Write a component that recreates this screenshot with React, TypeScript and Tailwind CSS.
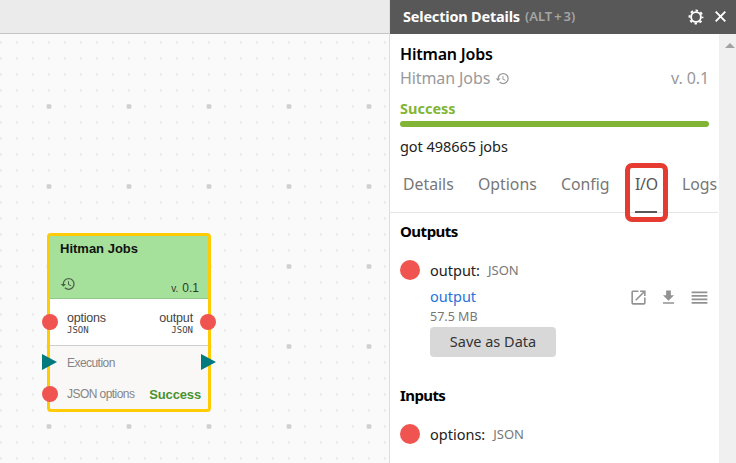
import type { ReactNode } from 'react';
import { MdHistory, MdOpenInNew, MdFileDownload, MdReorder } from 'react-icons/md';

function GridDots() {
  return (
    <svg className="absolute inset-0 h-full w-full" aria-hidden="true">
      <defs>
        <pattern id="minor" width="16" height="16" x="9" y="2" patternUnits="userSpaceOnUse">
          <rect x="7" y="7.5" width="2" height="2" fill="#e6e6e6" />
        </pattern>
        <pattern id="major" width="80" height="80" x="9" y="66" patternUnits="userSpaceOnUse">
          <rect x="37.7" y="38.2" width="4.6" height="4.6" rx="1" fill="#d0d0d0" />
        </pattern>
      </defs>
      <rect width="100%" height="100%" fill="url(#minor)" />
      <rect width="100%" height="100%" fill="url(#major)" />
    </svg>
  );
}

function Port({ className }: { className: string }) {
  return <span className={`absolute h-4 w-4 rounded-full bg-[#f05450] ${className}`} />;
}

function ExecPort({ className }: { className: string }) {
  return (
    <svg className={`absolute h-4 w-[15px] ${className}`} viewBox="0 0 15 16">
      <path d="M0 0L15 8L0 16Z" fill="#00797f" />
    </svg>
  );
}

function WorkflowNode() {
  return (
    <div className="absolute top-[233px] left-[47px] flex h-[179px] w-[164px] flex-col rounded-[4px] border-[3px] border-[#ffcb05] bg-[#faf8f6] font-['Liberation_Sans',sans-serif]">
      <div className="flex h-[63px] flex-col justify-between border-b border-[#92c98b] bg-[#a6e19c] pt-[4px] pr-[9px] pb-px pl-[10px]">
        <div className="text-[13px] leading-[17px] font-bold text-[#111]">Hitman Jobs</div>
        <div className="flex items-end justify-between">
          <MdHistory className="mb-[5px] h-[16px] w-[16px] text-[#4c5f49]" />
          <div className="text-[12px] leading-[17px] text-[#2c3b29]">
            <span className="mr-[4px] text-[10px]">v.</span>0.1
          </div>
        </div>
      </div>
      <div className="flex h-[47px] justify-between border-b border-[#cfcfcf] bg-white pr-[15px] pl-[17px] pt-[12px] text-[12.5px] leading-[15px] text-[#444]">
        <div>
          <div className="tracking-[-0.2px]">options</div>
          <div className="-mt-px font-['DejaVu_Sans_Mono',monospace] text-[9px] leading-[10px]">JSON</div>
        </div>
        <div className="text-right">
          <div className="tracking-[-0.15px]">output</div>
          <div className="-mt-px font-['DejaVu_Sans_Mono',monospace] text-[9px] leading-[10px]">JSON</div>
        </div>
      </div>
      <div className="flex flex-1 flex-col justify-between pt-[9px] pr-[7px] pb-[6px] pl-[17px] text-[12px] leading-[17px] text-[#858585]">
        <div className="tracking-[-0.55px]">Execution</div>
        <div className="flex justify-between">
          <span className="tracking-[-0.55px]">JSON options</span>
          <span className="text-[13px] font-bold tracking-[-0.15px] text-[#48922f]">Success</span>
        </div>
      </div>
      <Port className="top-[78px] left-[-8px]" />
      <Port className="top-[78px] right-[-8px]" />
      <ExecPort className="top-[118px] left-[-8px]" />
      <ExecPort className="top-[118px] right-[-8px]" />
      <Port className="top-[150px] left-[-8px]" />
    </div>
  );
}

function Gear() {
  return (
    <svg className="h-4 w-4" viewBox="0 0 16 16" fill="none" stroke="#fff">
      <circle cx="8" cy="8" r="4.9" strokeWidth="1.9" />
      <circle cx="8" cy="8" r="6.5" strokeWidth="1.9" strokeDasharray="2.5 2.605" strokeDashoffset="1.25" />
    </svg>
  );
}

function Tab({ children, active, className }: { children: ReactNode; active?: boolean; className: string }) {
  return (
    <div className={`relative h-[42px] shrink-0 whitespace-nowrap ${active ? 'text-[#555]' : 'text-[#777]'} ${className}`}>
      {children}
      {active && <span className="absolute bottom-0 left-0 h-[2px] w-[22px] bg-[#58585a]" />}
    </div>
  );
}

function DetailsPanel() {
  return (
    <div className="flex h-full w-[346px] shrink-0 flex-col font-['Noto_Sans',sans-serif]">
      <header className="flex h-[34px] shrink-0 items-center bg-[#585858] pr-[10px] pb-px pl-[13px] text-white">
        <span className="text-[14.5px] font-bold tracking-[-0.19px]">Selection Details</span>
        <span className="ml-[5px] text-[13px] font-semibold text-[#a5a5a5]">(ALT<span className="mx-[2px]">+</span>3)</span>
        <span className="ml-auto"><Gear /></span>
        <svg className="ml-[11px] h-[11px] w-[11px]" viewBox="0 0 11 11" stroke="#fff" strokeWidth="1.9">
          <path d="M.7.7L10.3 10.3M10.3.7L.7 10.3" />
        </svg>
      </header>
      <div className="flex min-h-0 flex-1">
        <main className="relative w-[329px] shrink-0 bg-white">
          <div className="pr-[10px] pl-[10px]">
            <h1 className="pt-[9px] text-[16px] leading-[22px] font-semibold tracking-[-0.2px] text-black">Hitman Jobs</h1>
            <div className="mt-[2px] flex h-[22px] items-center text-[16px] tracking-[-0.1px] text-[#999]">
              <span>Hitman Jobs</span>
              <MdHistory className="ml-[5px] h-[15px] w-[15px]" />
              <span className="ml-auto">v. 0.1</span>
            </div>
            <div className="mt-[9px] text-[14.5px] leading-[20px] font-bold text-[#82b536]">Success</div>
            <div className="mt-[3px] h-[6px] rounded-full bg-[#82b536]" />
            <div className="mt-[8px] text-[14.5px] leading-[22px] tracking-[-0.05px] text-[#222]">got 498665 jobs</div>
          </div>
          <nav className="mt-[14px] mr-px flex h-[42px] border-b border-[#e5e5e5] pl-[13px] text-[15.8px] leading-[26px]">
            <Tab className="w-[75px]">Details</Tab>
            <Tab className="w-[83px]">Options</Tab>
            <Tab className="w-[74px]">Config</Tab>
            <Tab active className="w-[47px] tracking-[-0.3px]">I/O</Tab>
            <Tab className="">Logs</Tab>
          </nav>
          <div className="absolute top-[129px] left-[235px] h-[59px] w-[43px] rounded-[7px] border-[5px] border-[#e53b30]" />
          <section className="pr-[10px] pl-[10px]">
            <h2 className="pt-[7px] text-[15px] leading-[22px] font-bold tracking-[-0.5px] text-black">Outputs</h2>
            <div className="mt-[17px] flex items-center">
              <span className="h-5 w-5 rounded-full bg-[#f05450]" />
              <span className="ml-[10px] text-[14.5px] leading-[22px] text-[#222]">output:</span>
              <span className="ml-[8px] text-[13px] leading-[18px] text-[#777]">JSON</span>
            </div>
            <div className="mt-[5px] flex h-[22px] items-center pl-[30px]">
              <a className="text-[14.5px] text-[#2673d9]">output</a>
              <div className="ml-auto flex items-center gap-[11px] text-[#929292]">
                <MdOpenInNew className="h-[19px] w-[19px]" />
                <MdFileDownload className="h-[19px] w-[19px]" />
                <MdReorder className="-mr-px h-[21px] w-[21px]" />
              </div>
            </div>
            <div className="pl-[30px] text-[12.5px] leading-[17px] text-[#777]">57.5 MB</div>
            <button className="mt-[2px] ml-[30px] flex h-[30px] w-[126px] items-center justify-center rounded-[4px] bg-[#d8d8d8] pb-px text-[14.5px] text-[#333]">Save as Data</button>
          </section>
          <section className="pl-[10px]">
            <h2 className="mt-[27px] text-[15px] leading-[22px] font-bold tracking-[-0.6px] text-black">Inputs</h2>
            <div className="mt-[17px] flex items-center">
              <span className="h-5 w-5 rounded-full bg-[#f05450]" />
              <span className="ml-[10px] text-[14.5px] leading-[22px] text-[#222]">options:</span>
              <span className="ml-[8px] text-[13px] leading-[18px] text-[#777]">JSON</span>
            </div>
          </section>
        </main>
        <div className="flex flex-1 justify-center bg-[#f0f0f0] pt-[9px] pl-[4px]">
          <svg className="h-[5px] w-[10px]" viewBox="0 0 10 5"><path d="M0 5L5 0L10 5Z" fill="#a2a2a2" /></svg>
        </div>
      </div>
    </div>
  );
}

export default function App() {
  return (
    <div className="flex h-[463px] w-[736px] overflow-hidden bg-white">
      <div className="relative w-[390px] shrink-0 border-r border-[#ddd] bg-[#fafafa]">
        <GridDots />
        <div className="relative h-[34px] border-b border-[#c4c4c4] bg-[#ebebeb]" />
        <WorkflowNode />
      </div>
      <DetailsPanel />
    </div>
  );
}
